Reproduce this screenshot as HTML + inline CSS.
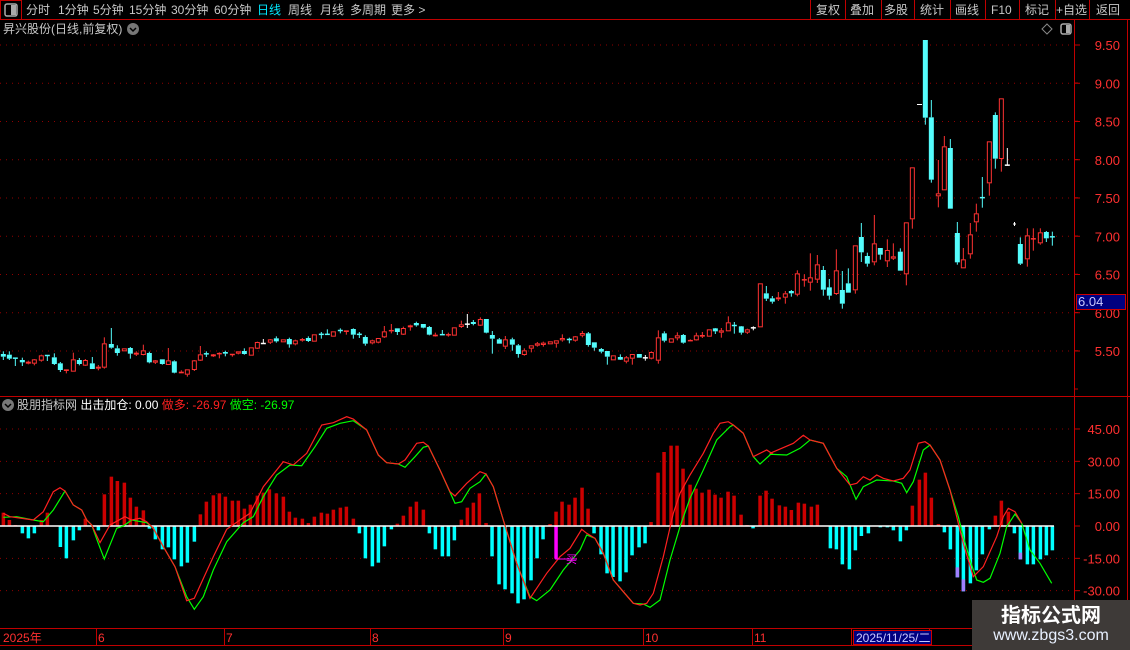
<!DOCTYPE html>
<html><head><meta charset="utf-8"><style>
*{margin:0;padding:0;box-sizing:border-box}
body{width:1130px;height:650px;background:#000;overflow:hidden;position:relative;font-family:"Liberation Sans","Noto Sans CJK SC",sans-serif;font-size:12px;color:#c8c8c8}
.t{position:absolute;white-space:nowrap;line-height:14px}
svg{position:absolute;left:0;top:0}
</style></head><body>
<svg id="s" width="1130" height="650" xmlns="http://www.w3.org/2000/svg"></svg>

<div class="t" style="left:26px;top:3px;">分时</div>
<div class="t" style="left:58px;top:3px;">1分钟</div>
<div class="t" style="left:93px;top:3px;">5分钟</div>
<div class="t" style="left:129px;top:3px;">15分钟</div>
<div class="t" style="left:171px;top:3px;">30分钟</div>
<div class="t" style="left:214px;top:3px;">60分钟</div>
<div class="t" style="left:257px;top:3px;color:#00e8ff">日线</div>
<div class="t" style="left:288px;top:3px;">周线</div>
<div class="t" style="left:320px;top:3px;">月线</div>
<div class="t" style="left:350px;top:3px;">多周期</div>
<div class="t" style="left:391px;top:3px;">更多 &gt;</div>
<div class="t" style="left:816px;top:3px;">复权</div>
<div class="t" style="left:850px;top:3px;">叠加</div>
<div class="t" style="left:884px;top:3px;">多股</div>
<div class="t" style="left:920px;top:3px;">统计</div>
<div class="t" style="left:955px;top:3px;">画线</div>
<div class="t" style="left:991px;top:3px;">F10</div>
<div class="t" style="left:1025px;top:3px;">标记</div>
<div class="t" style="left:1056px;top:3px;">+自选</div>
<div class="t" style="left:1096px;top:3px;">返回</div>
<div class="t" style="left:3px;top:22px;">昇兴股份(日线,前复权)</div>
<div class="t" style="left:17px;top:398px;">股朋指标网 <span style="color:#fff">出击加仓: 0.00</span> <span style="color:#ff2020">做多: -26.97</span> <span style="color:#00ff00">做空: -26.97</span></div>
<div class="t" style="left:1076px;top:294px;width:50px;height:16px;background:#000080;border:1px solid #c00;color:#c8c8ff;font-size:13px;padding-left:1px">6.04</div>
<div class="t" style="left:3px;top:631px;color:#ff3030">2025年</div>
<div class="t" style="left:98px;top:631px;color:#ff3030">6</div>
<div class="t" style="left:226px;top:631px;color:#ff3030">7</div>
<div class="t" style="left:372px;top:631px;color:#ff3030">8</div>
<div class="t" style="left:505px;top:631px;color:#ff3030">9</div>
<div class="t" style="left:645px;top:631px;color:#ff3030">10</div>
<div class="t" style="left:754px;top:631px;color:#ff3030">11</div>
<div class="t" style="left:853px;top:630px;width:79px;height:15px;background:#000080;border:1px solid #c00;color:#c8c8ff;padding-left:2px">2025/11/25/二</div>
<div style="position:absolute;left:972px;top:600px;width:158px;height:50px;background:#3e3a38"></div>
<div class="t" style="left:972px;top:604px;width:158px;text-align:center;color:#fff;font-size:20px;line-height:24px;font-weight:bold">指标公式网</div>
<div class="t" style="left:972px;top:627px;width:158px;text-align:center;color:#e8f0ff;font-size:16px;line-height:18px">www.zbgs3.com</div>

<script>
var S=document.getElementById('s'),o='';
function L(x1,y1,x2,y2,c,e){o+='<line x1="'+x1+'" y1="'+y1+'" x2="'+x2+'" y2="'+y2+'" stroke="'+c+'" '+(e||'')+'/>';}
function R(x,y,w,h,f,e){o+='<rect x="'+x+'" y="'+y+'" width="'+w+'" height="'+h+'" fill="'+f+'" '+(e||'')+'/>';}
function T(x,y,s,c){o+='<text x="'+x+'" y="'+y+'" fill="'+c+'" font-family="Liberation Sans" font-size="13" text-anchor="end">'+s+'</text>';}
L(0,19.5,1130,19.5,'#c00000');
R(0.5,0.5,21,19,'none','stroke="#c00000"');
R(5,4,12,12,'none','stroke="#aaa" stroke-width="1.5" rx="2"');R(11,5,5,10,'#aaa');
[810,845,881,914,950,985,1019,1055,1089].forEach(function(x){L(x+.5,0,x+.5,19,'#c00000');});
o+='<circle cx="133" cy="29" r="6" fill="#777"/><path d="M130 28l3 3 3-3" stroke="#000" fill="none" stroke-width="1.5"/>';
o+='<circle cx="8" cy="405" r="6" fill="#777"/><path d="M5 404l3 3 3-3" stroke="#000" fill="none" stroke-width="1.5"/>';
o+='<path d="M1047 24l5 5-5 5-5-5z" stroke="#888" fill="none"/>';
R(1061,24,10,10,'none','stroke="#aaa" stroke-width="1.5" rx="2"');R(1066,25,4,8,'#aaa');
L(1074.5,20,1074.5,628,'#c00000');L(1127.5,20,1127.5,650,'#c00000');
L(0,396.5,1130,396.5,'#c00000');L(0,628.5,1130,628.5,'#c00000');L(0,645.5,1130,645.5,'#c00000');
for(var p=5.5;p<=9.51;p+=0.5){var y=351-(p-5.5)*76.5;L(0,y,1074,y,'#900000','stroke-dasharray="1,5"');L(1074,y,1080,y,'#c00000');T(1120,y+5,p.toFixed(2),'#ff3030');L(1074,y+38,1078,y+38,'#c00000');}
[45,30,15,-15,-30].forEach(function(v){var y=526-v*2.156;L(0,y,1074,y,'#900000','stroke-dasharray="1,5"');L(1074,y,1080,y,'#c00000');T(1120,y+5,v.toFixed(2),'#ff3030');});
L(1074,526,1080,526,'#c00000');T(1120,531,'0.00','#ff3030');
[98,226,372,505,645,754,853,931].forEach(function(x){L(x-1.5,628,x-1.5,645,'#c00000');});
function C(off,oy,arr){arr.forEach(function(a){var x=off+a[0]/3,c=a[1]=='c'?'#54fcfc':a[1]=='r'?'#ff3232':'#ffffff';
var bt=oy+a[2]/3,bb=oy+a[3]/3,wt=oy+a[4]/3,wb=oy+a[5]/3;
L(x,wt,x,bt,c);L(x,bb,x,wb,c);
if(bb-bt<1.6){L(x-2.5,(bt+bb)/2,x+2.5,(bt+bb)/2,c,'stroke-width="1.5"');}
else if(a[1]=='c'||a[1]=='w'){R(x-2.5,bt,5,bb-bt,c);}
else{R(x-2,bt+.5,4,bb-bt-1,'none','stroke="'+c+'"');}});}
C(0,310,[[10,'c',132,140,124,150],[28,'c',134,146,124,150],[46,'c',143,146,143,168],[67,'c',150,157,143,168],[85,'r',155,161,152,163],[103,'r',148,161,147,166],[124,'r',136,152,134,155],[142,'c',136,137,136,153],[163,'c',142,162,130,165],[181,'c',160,180,156,186],[199,'r',178,183,178,190],[220,'r',148,185,128,185],[238,'c',150,162,144,166],[256,'r',150,167,147,168],[277,'c',160,177,141,177],[295,'r',170,176,165,181],[313,'r',100,173,82,176],[334,'c',102,113,54,116],[352,'c',115,129,106,137],[373,'r',115,124,115,124],[391,'c',114,131,111,146],[409,'r',128,134,124,138],[430,'r',121,135,104,136],[448,'c',129,157,125,160],[466,'r',151,158,150,162],[487,'c',148,162,148,164],[505,'r',151,165,114,165],[523,'c',154,188,151,190],[544,'r',185,190,181,190],[562,'r',178,194,178,200],[583,'r',151,180,150,183],[601,'r',133,152,108,153],[619,'c',130,133,124,141],[640,'r',133,139,132,141],[658,'r',129,133,127,145],[676,'c',126,131,122,139],[697,'r',133,134,133,140],[715,'r',124,131,124,133],[733,'c',123,132,115,134],[754,'r',112,137,112,137],[772,'r',96,116,95,117],[790,'w',100,101,87,101],[811,'r',88,98,87,102],[829,'c',85,94,79,98],[850,'r',88,97,88,97],[868,'c',87,103,83,113],[886,'r',91,103,89,106],[907,'r',87,92,84,95],[925,'c',84,93,79,96],[943,'r',73,95,73,95],[964,'c',72,74,66,86],[982,'c',72,74,58,75],[1000,'r',64,80,64,80],[1021,'c',61,62,55,70],[1039,'r',61,66,61,74],[1060,'c',57,74,55,86],[1078,'c',72,74,66,84],[1096,'c',81,101,76,107],[1117,'r',91,100,89,103],[1135,'r',84,98,84,100],[1153,'r',64,82,48,84],[1174,'r',60,64,42,70],[1192,'c',55,66,55,75],[1210,'r',54,74,50,75],[1231,'r',46,52,44,62],[1249,'c',39,46,35,50],[1270,'c',42,53,42,55],[1288,'c',51,74,48,76],[1306,'r',74,79,68,80],[1327,'c',73,75,60,75],[1345,'r',73,76,68,80]]);
C(450,200,[[13,'r',382,407,382,407],[34,'r',373,381,362,384],[52,'w',372,373,342,384],[70,'c',366,372,360,376],[91,'r',357,377,352,378],[109,'c',357,398,357,400],[127,'c',405,416,393,461],[148,'c',418,431,414,431],[166,'r',418,440,408,447],[187,'c',418,434,413,452],[205,'c',436,462,432,473],[223,'r',451,465,445,467],[244,'r',436,446,436,457],[262,'r',430,437,426,440],[280,'r',428,435,425,440],[301,'r',424,433,424,433],[319,'r',421,431,421,443],[337,'r',414,421,403,425],[358,'c',417,420,413,430],[376,'r',409,422,408,425],[397,'r',399,407,393,412],[415,'c',400,435,396,440],[433,'c',427,443,427,452],[454,'c',447,455,444,460],[472,'c',453,470,453,494],[490,'r',466,481,466,481],[511,'c',471,479,463,480],[529,'r',472,485,468,490],[547,'r',462,476,462,494],[568,'c',462,473,462,473],[586,'w',473,474,465,482],[604,'r',456,476,454,478],[625,'r',412,482,391,491],[643,'c',400,422,394,427],[664,'r',415,428,415,428],[682,'r',406,415,397,421],[700,'c',405,428,402,431],[721,'r',420,424,418,424],[739,'r',406,421,398,422],[757,'r',405,410,396,414],[778,'r',388,410,388,410],[796,'c',385,394,384,402],[814,'r',391,398,384,413],[835,'r',367,394,349,394],[853,'c',375,378,366,401],[874,'c',379,398,378,404],[892,'r',388,398,386,402],[910,'w',383,384,379,391],[931,'r',250,382,250,382],[949,'c',280,296,258,303],[967,'c',295,305,288,311],[985,'r',292,298,276,303],[1006,'r',280,293,273,311],[1024,'c',273,280,270,290],[1042,'r',220,284,211,289],[1063,'r',238,241,223,260],[1081,'r',232,248,160,272],[1102,'r',193,239,165,249],[1120,'c',210,269,198,287],[1138,'c',262,287,237,299],[1159,'r',211,282,148,285],[1177,'c',270,311,213,326],[1195,'c',250,278,205,278],[1216,'r',136,271,136,281],[1234,'c',111,157,69,186],[1252,'c',168,191,158,200],[1273,'r',130,187,45,196],[1291,'c',144,164,144,179],[1312,'r',150,184,118,201]]);
C(880,30,[[40,'r',679,686,640,690],[61,'c',665,722,655,722],[79,'r',577,733,577,766],[97,'r',412,568,412,596],[136,'c',30,263,30,284],[154,'c',262,449,210,458],[175,'r',490,499,390,532],[193,'r',349,481,318,481],[211,'c',354,536,327,536],[232,'c',609,697,576,704],[250,'r',688,715,654,715],[271,'r',613,673,579,686],[289,'r',550,577,521,605],[307,'c',501,505,441,533],[328,'r',334,460,334,497],[346,'c',255,386,247,416],[364,'r',205,387,205,425],[382,'w',405,406,354,406],[421,'c',642,701,622,705],[442,'r',616,688,595,710],[460,'r',625,628,595,662],[481,'r',607,640,595,644],[499,'c',606,625,603,636],[517,'c',620,621,605,647]]);
L(917,104.5,922,104.5,'#fff');L(1013,224,1016,224,'#fff');L(1014.5,222,1014.5,226,'#fff');
function H(off,arr){arr.forEach(function(a){var x=off+a[0]/3-1.7,h=a[1]/3,c=a[2]=='r'?'#cc0000':a[2]=='c'?'#00ffff':a[2]=='m'?'#ff00ff':'#a080ff';
if(a[3]){R(x,526+a[3]/3,3.5,(a[1]-a[3])/3,c);return;}
if(h>0)R(x,526-h,3.5,h,c);else R(x,526,3.5,-h,c);});}
H(0,[[10,40,'r'],[28,18,'r'],[46,3,'r'],[67,-22,'c'],[85,-37,'c'],[103,-22,'c'],[124,18,'r'],[142,40,'r'],[181,-63,'c'],[199,-97,'c'],[220,-43,'c'],[238,-13,'c'],[256,22,'r'],[295,-13,'c'],[313,95,'r'],[334,148,'r'],[352,135,'r'],[373,130,'r'],[391,85,'r'],[409,58,'r'],[430,47,'r'],[448,-8,'c'],[466,-40,'c'],[487,-70,'c'],[505,-64,'c'],[523,-100,'c'],[544,-121,'c'],[562,-110,'c'],[583,-47,'c'],[601,35,'r'],[619,73,'r'],[640,92,'r'],[658,98,'r'],[676,88,'r'],[697,76,'r'],[715,76,'r'],[733,52,'r'],[751,64,'r'],[772,91,'r'],[790,100,'r'],[808,110,'r'],[829,98,'r'],[850,88,'r'],[868,43,'r'],[886,25,'r'],[907,22,'r'],[925,9,'r'],[943,28,'r'],[964,40,'r'],[982,37,'r'],[1000,49,'r'],[1021,55,'r'],[1039,58,'r'],[1060,22,'r'],[1078,-22,'c'],[1096,-97,'c'],[1117,-121,'c'],[1135,-110,'c'],[1153,-61,'c'],[1174,-10,'c'],[1192,7,'r'],[1210,31,'r'],[1231,58,'r'],[1249,73,'r'],[1270,49,'r'],[1288,-22,'c'],[1306,-70,'c'],[1327,-91,'c'],[1345,-91,'c'],[1363,-43,'c'],[1384,19,'r'],[1402,55,'r'],[1420,70,'r'],[1438,98,'r']]);
H(480,[[18,9,'r'],[36,-91,'c'],[57,-175,'c'],[75,-190,'c'],[96,-202,'c'],[114,-232,'c'],[132,-220,'c'],[153,-163,'c'],[171,-97,'c'],[189,-40,'c'],[210,6,'r'],[228,-98,'m'],[228,43,'r'],[246,73,'r'],[267,64,'r'],[285,85,'r'],[306,115,'r'],[324,52,'r'],[342,-22,'c'],[363,-85,'c'],[381,-142,'c'],[399,-153,'c'],[420,-166,'c'],[438,-139,'c'],[456,-88,'c'],[477,-64,'c'],[495,-52,'c'],[513,12,'r'],[534,160,'r'],[552,222,'r'],[573,241,'r'],[591,241,'r'],[609,172,'r'],[630,124,'r'],[648,112,'r'],[666,100,'r'],[687,109,'r'],[705,94,'r'],[723,85,'r'],[744,103,'r'],[762,91,'r'],[783,34,'r'],[801,3,'r'],[819,-7,'c'],[840,91,'r'],[858,106,'r']]);
H(770,[[6,82,'r'],[28,62,'r'],[46,58,'r'],[64,48,'r'],[85,70,'r'],[103,67,'r'],[124,58,'r'],[142,64,'r'],[181,-67,'c'],[199,-70,'c'],[217,-115,'c'],[238,-130,'c'],[256,-73,'c'],[274,-30,'c'],[295,-22,'c'],[331,-4,'c'],[352,-4,'c'],[370,-13,'c'],[391,-46,'c'],[409,-13,'c'],[427,61,'r'],[448,139,'r'],[466,160,'r'],[484,85,'r'],[505,6,'r'],[523,-19,'c'],[541,-70,'c'],[562,-154,'c'],[562,154,'p',124],[580,-196,'c'],[580,196,'p',160],[601,-172,'c'],[619,-133,'c'],[637,-85,'c'],[658,-10,'c'],[676,31,'r'],[694,76,'r'],[715,43,'r'],[733,-22,'c'],[751,-100,'c'],[751,100,'p',80],[772,-115,'c'],[790,-115,'c'],[811,-100,'c'],[829,-88,'c'],[847,-73,'c']]);
L(0,526,1054,526,'#ffffff','stroke-width="1.5"');
function P(segs,c){var pts=[];segs.forEach(function(s){for(var i=0;i<s[1].length;i+=2)pts.push((s[0]+s[1][i]/3).toFixed(1)+','+(410+s[1][i+1]/3).toFixed(1));});
o+='<polyline points="'+pts.join(' ')+'" fill="none" stroke="'+c+'" stroke-width="1.2"/>';}
P([[0,[10,322,50,320,100,330,130,335,160,300,195,243,220,285,245,300,260,330,275,345,295,400,313,447,350,355,370,348,395,330,440,338,460,355,490,410,525,470,560,560,583,598,610,560,640,480,680,395,730,338,760,320,790,260,830,195,870,165,905,167,945,110,980,55,1020,40,1060,32,1100,60,1135,135,1160,158,1195,162,1215,172,1245,140,1270,112,1285,108,1320,180,1365,280,1385,275,1410,235,1440,215]],
[480,[18,192,40,230,70,330,110,460,150,560,170,572,210,540,250,480,300,420,320,375,345,385,370,430,400,510,430,545,460,580,490,582,510,592,540,570,570,450,600,350,630,265,670,180,710,90,750,50,760,45,790,70,820,140,840,162,870,135]],
[770,[0,133,50,135,90,115,120,90,160,100,200,175,230,200,258,268,280,230,320,210,370,213,395,220,410,248,430,215,460,120,480,105,510,150,540,240,565,320,580,380,600,450,620,510,640,517,660,505,690,430,710,350,735,312,755,340,780,420,810,460,845,520]]],'#00ff00');
P([[0,[10,310,30,320,100,330,130,305,160,245,180,233,195,243,220,285,245,300,260,330,275,345,300,398,330,345,375,320,395,330,420,325,440,335,460,355,490,410,525,470,560,572,583,565,640,440,680,358,720,330,750,310,790,230,850,155,880,165,920,130,965,45,1000,38,1040,20,1060,27,1100,60,1135,135,1160,158,1195,162,1215,150,1250,100,1270,97,1285,108,1320,180,1350,245,1365,258,1400,220,1440,185]],
[480,[18,192,40,230,70,330,110,460,150,565,200,490,240,440,270,415,305,358,320,370,345,385,370,430,400,510,430,545,460,580,480,585,500,580,520,550,550,440,580,310,600,250,630,195,670,130,700,70,720,40,745,35,760,45,790,70,820,140,860,120,875,130]],
[770,[0,130,70,100,100,76,120,90,160,100,200,175,240,225,260,220,280,200,300,210,320,195,340,205,370,213,400,205,420,180,445,100,465,95,480,105,510,150,540,240,560,320,580,400,610,500,640,470,680,380,700,320,715,295,735,305,755,340]]],'#ff2020');
L(555,559,577,559,'#ff00ff');
o+='<text x="566" y="563" fill="#ff00ff" font-family="Noto Sans CJK SC" font-size="11">买</text>';
S.innerHTML=o;
</script>
</body></html>
